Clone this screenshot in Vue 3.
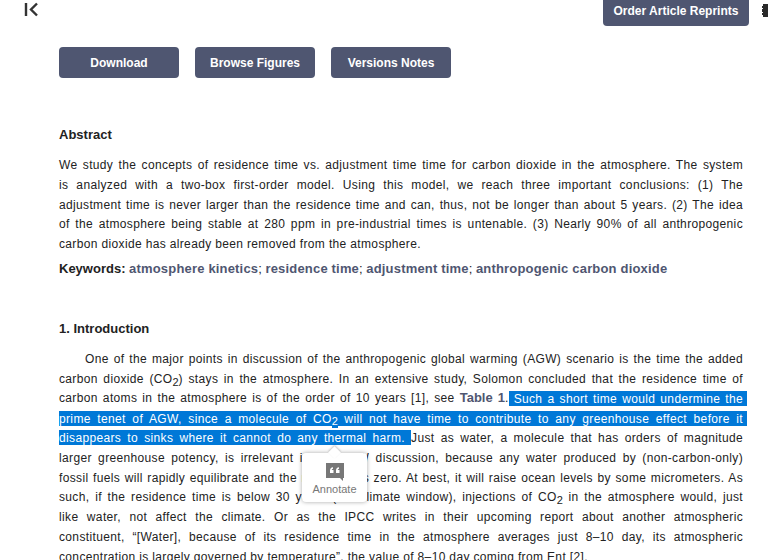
<script setup>
const buttons = ['Download', 'Browse Figures', 'Versions Notes']
const abstractLines = [
  'We study the concepts of residence time vs. adjustment time time for carbon dioxide in the atmosphere. The system',
  'is analyzed with a two-box first-order model. Using this model, we reach three important conclusions: (1) The',
  'adjustment time is never larger than the residence time and can, thus, not be longer than about 5 years. (2) The idea',
  'of the atmosphere being stable at 280 ppm in pre-industrial times is untenable. (3) Nearly 90% of all anthropogenic',
]
</script>

<template>
  <div class="page">
    <header class="top">
      <svg class="back" width="16" height="16" viewBox="0 0 16 16" aria-hidden="true">
        <path d="M2 1v13M13 1.500L7 7.500l6 6" fill="none" stroke="#333" stroke-width="2.400" />
      </svg>
      <a class="btn reprint">Order Article Reprints</a>
    </header>
    <svg class="gear" width="6" height="13" viewBox="0 0 6 13" aria-hidden="true">
      <path d="M1 0h5v13H1v-2H0V9h1V8H0V5h1V4H0V2h1z" fill="#2a2a2a" />
    </svg>
    <nav class="actions">
      <a v-for="b in buttons" :key="b" class="btn action">{{ b }}</a>
    </nav>
    <section class="abstract">
      <h2>Abstract</h2>
      <p>
        <span v-for="l in abstractLines" :key="l" class="ln">{{ l }}</span>
        <span class="ln end">carbon dioxide has already been removed from the atmosphere.</span>
      </p>
      <p class="keywords"><b>Keywords:</b> <a>atmosphere kinetics</a>; <a>residence time</a>; <a>adjustment time</a>; <a>anthropogenic carbon dioxide</a></p>
    </section>
    <section class="intro">
      <h2>1. Introduction</h2>
      <p>
        <span class="ln first">One of the major points in discussion of the anthropogenic global warming (AGW) scenario is the time the added</span>
        <span class="ln">carbon dioxide (CO<sub>2</sub>) stays in the atmosphere. In an extensive study, Solomon concluded that the residence time of</span>
        <span class="ln">carbon atoms in the atmosphere is of the order of 10 years [1], see <a class="ref">Table 1</a>.<span class="sel tail"> Such a short time would undermine the</span></span>
        <span class="ln"><span class="sel tail">prime tenet of AGW, since a molecule of CO<sub>2</sub> will not have time to contribute to any greenhouse effect before it</span></span>
        <span class="ln"><span class="sel">disappears to sinks where it cannot do any thermal harm. </span>Just as water, a molecule that has orders of magnitude</span>
        <span class="ln">larger greenhouse potency, is irrelevant in the AGW discussion, because any water produced by (non-carbon-only)</span>
        <span class="ln">fossil fuels will rapidly equilibrate and the net effect is zero. At best, it will raise ocean levels by some micrometers. As</span>
        <span class="ln">such, if the residence time is below 30 years (the climate window), injections of CO<sub>2</sub> in the atmosphere would, just</span>
        <span class="ln">like water, not affect the climate. Or as the IPCC writes in their upcoming report about another atmospheric</span>
        <span class="ln">constituent, “[Water], because of its residence time in the atmosphere averages just 8–10 day, its atmospheric</span>
        <span class="ln end">concentration is largely governed by temperature”, the value of 8–10 day coming from Ent [2].</span>
      </p>
    </section>
    <div class="popup">
      <svg width="20" height="20" viewBox="0 0 20 20" aria-hidden="true">
        <path d="M1 1h18v15h-1v3l-3-3H1z" fill="#777" />
        <path d="M5 8.500c0-2 1-3 3-3.200v1.400c-.8.1-1.200.5-1.200 1.300H8.500V11H5zM11 8.500c0-2 1-3 3-3.200v1.400c-.8.1-1.200.5-1.200 1.300h1.700V11H11z" fill="#fff" />
      </svg>
      <span class="label">Annotate</span>
    </div>
  </div>
</template>

<style scoped>
.page {
  position: relative;
  width: 768px;
  height: 560px;
  overflow: hidden;
  background: #fff;
  color: #222;
  font: 12px/19.8px "Liberation Sans", Arial, sans-serif;
  box-sizing: border-box;
  padding: 0 25px 0 59px;
}
.top {
  display: flex;
  justify-content: space-between;
  margin-left: -35px;
  margin-right: -6px;
  height: 47px;
}
.back { margin-top: 2px; }
.gear { position: absolute; left: 762px; top: 4px; }
.btn {
  display: flex;
  align-items: center;
  justify-content: center;
  background: #4f5671;
  color: #fff;
  font-weight: 700;
  border-radius: 4px;
  box-sizing: border-box;
}
.reprint { width: 146px; height: 26px; border-radius: 0 0 4px 4px; padding-bottom: 2px; }
.actions { display: flex; gap: 16px; }
.action { width: 120px; height: 31px; padding-top: 2px; }
h2 { margin: 0; font-size: 13px; font-weight: 700; color: #222; }
.abstract { margin-top: 46px; padding-top: 1px; }
.abstract h2 { margin-bottom: 11.2px; }
p { margin: 0; }
.ln {
  display: block;
  height: 19.8px;
  white-space: nowrap;
  text-align: justify;
  text-align-last: justify;
  letter-spacing: .35px;
}
.ln.end { text-align-last: left; }
.first { padding-left: 26px; }
.keywords { margin-top: 4px; font-size: 13px; }
.keywords a { color: #4f5671; font-weight: 700; letter-spacing: .18px; }
.intro { margin-top: 40px; }
.intro h2 { margin-bottom: 10px; padding-bottom: 1.2px; }
.ref { color: #4f5671; font-weight: 700; font-size: 13px; line-height: 0; letter-spacing: 0; }
sub { font-size: 11px; line-height: 0; vertical-align: -3px; letter-spacing: 0; }
.sel { background: #0078d7; color: #fff; padding: .5px 0; }
.sel sub { background: #0078d7; padding: 2px 0 1px; }
.tail { padding-right: 4px; margin-right: -4px; }
.popup {
  position: absolute;
  left: 302px;
  top: 453px;
  width: 65px;
  height: 49px;
  background: #fff;
  border-radius: 4px;
  box-shadow: 0 0 4px rgba(0, 0, 0, .35);
  display: flex;
  flex-direction: column;
  align-items: center;
  padding-top: 9px;
  box-sizing: border-box;
  color: #777;
  font-size: 11px;
  line-height: 13px;
}
.label { margin-top: 1px; }
.popup::before {
  content: "";
  position: absolute;
  left: 28px;
  top: -5px;
  width: 9px;
  height: 9px;
  background: #fff;
  transform: rotate(45deg);
  box-shadow: -1px -1px 2px rgba(0, 0, 0, .2);
}
.popup svg { position: relative; }
</style>
